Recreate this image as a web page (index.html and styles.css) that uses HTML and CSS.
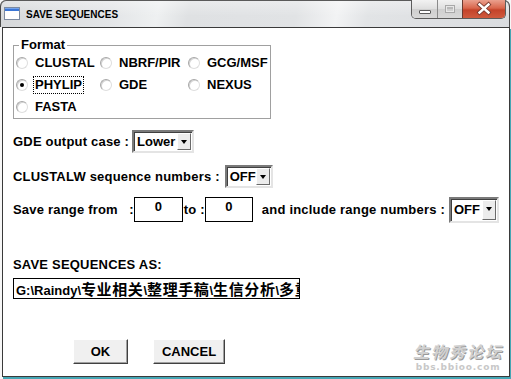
FILE: index.html
```html
<!DOCTYPE html>
<html>
<head>
<meta charset="utf-8">
<title>SAVE SEQUENCES</title>
<link rel="stylesheet" href="styles.css">
</head>
<body>
<div class="window">
  <div class="titlebar">
    <svg class="appicon" width="16" height="13" viewBox="0 0 16 13">
      <rect x="0.5" y="0.5" width="15" height="12" fill="#ffffff" stroke="#7c8aa0"/>
      <rect x="1" y="1" width="14" height="3" fill="#3b76d6"/>
      <rect x="1" y="1" width="14" height="1" fill="#76a4ec"/>
    </svg>
    <span class="title">SAVE SEQUENCES</span>
    <div class="caption-buttons">
      <div class="cbtn cbtn-min"><span class="min-glyph"></span></div>
      <div class="cbtn cbtn-max"><span class="max-glyph"></span></div>
      <div class="cbtn cbtn-close">
        <svg width="42" height="18" viewBox="0 0 42 18">
          <path d="M16.5 4.5 L25.5 12.5 M25.5 4.5 L16.5 12.5" stroke="#7a3a30" stroke-width="4.2" stroke-linecap="square" fill="none"/>
          <path d="M16.5 4.5 L25.5 12.5 M25.5 4.5 L16.5 12.5" stroke="#ffffff" stroke-width="2.4" stroke-linecap="square" fill="none"/>
        </svg>
      </div>
    </div>
  </div>
  <div class="client">
    <fieldset class="group">
      <legend>Format</legend>
      <div class="radios">
        <div class="radio"><span class="dot"></span><span class="lbl">CLUSTAL</span></div>
        <div class="radio"><span class="dot"></span><span class="lbl">NBRF/PIR</span></div>
        <div class="radio"><span class="dot"></span><span class="lbl">GCG/MSF</span></div>
        <div class="radio"><span class="dot on"></span><span class="lbl focus">PHYLIP</span></div>
        <div class="radio"><span class="dot"></span><span class="lbl">GDE</span></div>
        <div class="radio"><span class="dot"></span><span class="lbl">NEXUS</span></div>
        <div class="radio"><span class="dot"></span><span class="lbl">FASTA</span></div>
      </div>
    </fieldset>

    <div class="row row-gde">
      <span>GDE output case :</span>
      <div class="combo combo-lower"><span class="val">Lower</span><span class="arrow"></span></div>
    </div>

    <div class="row row-clw">
      <span>CLUSTALW sequence numbers :</span>
      <div class="combo combo-off"><span class="val">OFF</span><span class="arrow"></span></div>
    </div>

    <div class="row row-range">
      <span class="from">Save range from&nbsp;&nbsp;&nbsp;:</span>
      <div class="entry entry-num">0</div>
      <span class="to">to :</span>
      <div class="entry entry-num entry-num2">0</div>
      <span class="incl">and include range numbers :</span>
      <div class="combo combo-off2"><span class="val">OFF</span><span class="arrow"></span></div>
    </div>

    <div class="saveas">SAVE SEQUENCES AS:</div>
    <div class="entry entry-path">G:\Raindy\<span class="cjk">专业相关</span>\<span class="cjk">整理手稿</span>\<span class="cjk">生信分析</span>\<span class="cjk">多重</span></div>

    <div class="buttons">
      <div class="btn btn-ok">OK</div>
      <div class="btn btn-cancel">CANCEL</div>
    </div>

    <div class="watermark">
      <div class="wm-cn">生物秀论坛</div>
      <div class="wm-en">bbs.bbioo.com</div>
    </div>
  </div>
</div>
</body>
</html>
```

FILE: styles.css
```css
* { box-sizing: border-box; }
html, body { margin: 0; padding: 0; background: #ffffff; }
body {
  width: 511px;
  height: 379px;
  overflow: hidden;
  font-family: "Liberation Sans", Arial, sans-serif;
  font-weight: bold;
  font-size: 13px;
  color: #000;
}

.window {
  width: 511px;
  height: 379px;
  background: #f7f7f7;
}

/* ---------- title bar ---------- */
.titlebar {
  width: 510px;
  height: 27px;
  display: flex;
  align-items: flex-start;
  border-left: 1px solid #4a4a4a;
  border-right: 1px solid #4a4a4a;
  border-top-left-radius: 6px;
  border-top-right-radius: 6px;
  box-shadow: inset 0 1px 0 #5a5a5a;
  background:
    linear-gradient(to bottom, rgba(255,255,255,0.35), rgba(255,255,255,0) 60%),
    linear-gradient(100deg, #d6d8da 0%, #e3e5e7 22%, #eef0f1 31%, #dfe1e3 37%, #e1e3e5 58%, #f2f3f4 66%, #e2e4e6 72%, #dadcdf 100%);
}
.appicon {
  margin: 7px 0 0 3px;
  flex: none;
}
.title {
  margin: 9px 0 0 6px;
  font-size: 10px;
  line-height: 12px;
  color: #000;
}
.caption-buttons {
  margin-left: auto;
  margin-right: 3px;
  display: flex;
  height: 19px;
  border: 1px solid #5c5c5c;
  border-top: none;
  border-radius: 0 0 5px 5px;
  overflow: hidden;
}
.cbtn {
  height: 18px;
  display: flex;
  align-items: center;
  justify-content: center;
}
.cbtn-min {
  width: 26px;
  border-right: 1px solid #8a8a8a;
  background: linear-gradient(to bottom, #f2f2f2 0%, #dedede 50%, #cfcfcf 51%, #d8d8d8 100%);
}
.cbtn-max {
  width: 25px;
  border-right: 1px solid #6a3a30;
  background: linear-gradient(to bottom, #f2f2f2 0%, #dedede 50%, #cfcfcf 51%, #d8d8d8 100%);
}
.cbtn-close {
  width: 42px;
  background: linear-gradient(to bottom, #eaa08e 0%, #d9664c 45%, #c4432a 55%, #cf5a3e 100%);
}
.min-glyph {
  width: 12px;
  height: 4px;
  margin-top: 6px;
  background: #ffffff;
  border: 1px solid #5a5a5a;
  border-radius: 1px;
}
.max-glyph {
  width: 10px;
  height: 8px;
  border: 1px solid #a8a8a8;
  box-shadow: inset 0 0 0 1px #e8e8e8, inset 0 2px 0 1px #b8b8b8;
}

/* ---------- client area ---------- */
.client {
  position: relative;
  margin-left: 2px;
  width: 508px;
  height: 350px;
  border: 1px solid #3a3a3a;
  background: #ffffff;
  padding: 10px 0 0 10px;
  box-shadow: 1px 2px 0 #45a6b4;
}

/* group box */
.group {
  margin: 0;
  width: 258px;
  padding: 0 0 0 2px;
  border: 1px solid #a0a0a0;
  min-inline-size: 0;
}
.group legend {
  margin-left: 3px;
  padding: 0 2px;
  font-size: 13px;
  line-height: 14px;
}
.radios {
  display: grid;
  grid-template-columns: 84px 88px 1fr;
  grid-template-rows: 22px 22px 22px;
}
.radio {
  display: flex;
  align-items: center;
  white-space: nowrap;
}
.dot {
  flex: none;
  width: 12px;
  height: 12px;
  border-radius: 50%;
  border: 1px solid;
  border-color: #a8a8a8 #dedede #dedede #a8a8a8;
  background: #ffffff;
  box-shadow: inset 1px 1px 0 #d4d4d4;
  display: flex;
  align-items: center;
  justify-content: center;
}
.dot.on::after {
  content: "";
  width: 4px;
  height: 4px;
  border-radius: 50%;
  background: #000;
}
.lbl {
  margin-left: 5px;
  padding: 1px 1px;
  line-height: 14px;
  border: 1px dotted transparent;
}
.lbl.focus { border-color: #000; }

/* rows */
.row {
  display: flex;
  align-items: center;
  white-space: nowrap;
  letter-spacing: 0.2px;
}
.row-gde { margin-top: 11px; height: 23px; gap: 3px; }
.row-clw { margin-top: 12px; height: 23px; gap: 5px; }
.row-range { margin-top: 9px; height: 25px; }

.combo {
  height: 23px;
  display: flex;
  align-items: stretch;
  border: 2px solid;
  border-color: #7a7a7a #e4e4e4 #e4e4e4 #7a7a7a;
  box-shadow: inset 1px 1px 0 #404040;
  background: #ffffff;
  padding: 1px 1px 1px 2px;
  letter-spacing: 0;
}
.combo .val {
  flex: 1;
  display: flex;
  align-items: center;
  padding-left: 1px;
}
.combo .arrow {
  flex: none;
  width: 14px;
  border: 1px solid;
  border-color: #ffffff #6a6a6a #6a6a6a #ffffff;
  background: #ececec;
  position: relative;
}
.combo .arrow::after {
  content: "";
  position: absolute;
  left: 3px;
  top: 6px;
  border-left: 3.5px solid transparent;
  border-right: 3.5px solid transparent;
  border-top: 4px solid #000;
}
.combo-lower { width: 62px; }
.combo-off { width: 48px; }
.combo-off2 { width: 50px; height: 26px; margin-left: 4px; }

.entry {
  border: 1px solid #000;
  background: #fff;
  white-space: nowrap;
  overflow: hidden;
}
.entry-num {
  width: 49px;
  height: 25px;
  text-align: center;
  line-height: 14px;
  padding-top: 2px;
}
.entry-num2 { width: 48px; }
.to { margin-left: 1px; }
.incl { margin-left: 9px; }

.saveas {
  margin-top: 35px;
  line-height: 16px;
  letter-spacing: 0.2px;
}
.entry-path {
  margin-top: 5px;
  width: 287px;
  height: 21px;
  line-height: 19px;
  padding-left: 2px;
}
.cjk {
  font-family: "Noto Sans CJK SC", sans-serif;
  font-size: 15px;
  font-weight: bold;
  letter-spacing: 0.6px;
}

.buttons {
  margin: 40px 0 0 60px;
  display: flex;
  gap: 25px;
}
.btn {
  height: 25px;
  display: flex;
  align-items: center;
  justify-content: center;
  background: #f0f0f0;
  border: 1px solid;
  border-color: #ffffff #404040 #404040 #ffffff;
  box-shadow: inset -1px -1px 0 #a0a0a0;
}
.btn-ok { width: 55px; }
.btn-cancel { width: 72px; }

.watermark {
  position: absolute;
  right: 2px;
  bottom: 4px;
  width: 98px;
  display: flex;
  flex-direction: column;
  align-items: center;
  gap: 2px;
  color: #d0d0d0;
  font-weight: normal;
}
.wm-cn {
  font-family: "Noto Sans CJK SC", sans-serif;
  font-style: italic;
  font-weight: bold;
  font-size: 16px;
  line-height: 18px;
  letter-spacing: 2px;
  text-shadow: 1px 1px 0 #9a9a9a;
}
.wm-en {
  font-family: "DejaVu Sans", sans-serif;
  font-weight: bold;
  font-size: 9px;
  line-height: 10px;
  letter-spacing: 0.8px;
  color: #c8c8c8;
}
```
